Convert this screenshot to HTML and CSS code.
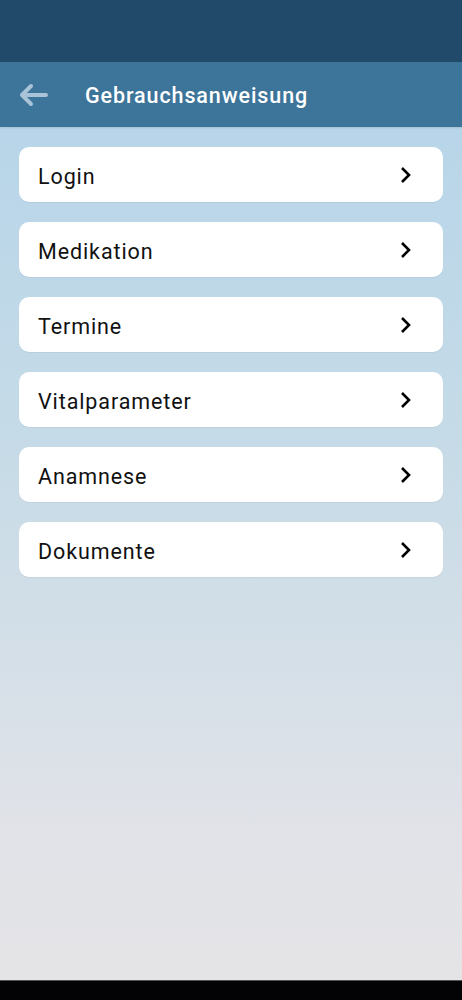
FILE: index.html
```html
<!DOCTYPE html>
<html lang="de">
<head>
  <meta charset="UTF-8">
  <meta name="viewport" content="width=device-width, initial-scale=1.0">
  <title>Gebrauchsanweisung</title>
  <link rel="stylesheet" href="styles.css">
</head>
<body>
  <div class="screen">
    <div class="status-bar"></div>
    <header class="app-bar">
      <button class="back-button" aria-label="Zurück">
        <svg width="32" height="24" viewBox="0 0 32 24">
          <path d="M29 12H5M14 3L5 12l9 9" fill="none" stroke="#a9c3d8" stroke-width="4" stroke-linecap="round" stroke-linejoin="round"/>
        </svg>
      </button>
      <h1>Gebrauchsanweisung</h1>
    </header>

    <main class="menu">
      <a class="menu-item" href="#"><span>Login</span><svg class="chevron" width="14" height="18" viewBox="0 0 14 18"><path d="M3 2l7 7-7 7" fill="none" stroke="#000" stroke-width="2.6"/></svg></a>
      <a class="menu-item" href="#"><span>Medikation</span><svg class="chevron" width="14" height="18" viewBox="0 0 14 18"><path d="M3 2l7 7-7 7" fill="none" stroke="#000" stroke-width="2.6"/></svg></a>
      <a class="menu-item" href="#"><span>Termine</span><svg class="chevron" width="14" height="18" viewBox="0 0 14 18"><path d="M3 2l7 7-7 7" fill="none" stroke="#000" stroke-width="2.6"/></svg></a>
      <a class="menu-item" href="#"><span>Vitalparameter</span><svg class="chevron" width="14" height="18" viewBox="0 0 14 18"><path d="M3 2l7 7-7 7" fill="none" stroke="#000" stroke-width="2.6"/></svg></a>
      <a class="menu-item" href="#"><span>Anamnese</span><svg class="chevron" width="14" height="18" viewBox="0 0 14 18"><path d="M3 2l7 7-7 7" fill="none" stroke="#000" stroke-width="2.6"/></svg></a>
      <a class="menu-item" href="#"><span>Dokumente</span><svg class="chevron" width="14" height="18" viewBox="0 0 14 18"><path d="M3 2l7 7-7 7" fill="none" stroke="#000" stroke-width="2.6"/></svg></a>
    </main>

    <div class="nav-bar"></div>
  </div>
</body>
</html>
```

FILE: styles.css
```css
body {
  margin: 0;
  font-family: Roboto, 'Noto Sans', Arial, sans-serif;
}

.screen {
  height: 1000px;
  display: flex;
  flex-direction: column;
  background: linear-gradient(180deg, #b2d3ea 0%, #c6dbe7 45%, #e2e3e8 85%, #e4e4e6 100%);
}

.status-bar {
  height: 62px;
  background: #20496a;
}

.app-bar {
  height: 65px;
  display: flex;
  align-items: center;
  background: #3d7499;
  box-shadow: 0 1px 2px rgba(0, 0, 0, 0.1);
}

.back-button {
  background: none;
  border: none;
  padding: 0;
  margin-left: 17px;
  width: 32px;
  height: 24px;
  cursor: pointer;
}

.back-button svg {
  display: block;
}

.app-bar h1 {
  margin: 2px 0 0 36px;
  color: #ffffff;
  font-size: 21.5px;
  font-weight: 500;
  letter-spacing: 0.9px;
}

.menu {
  flex: 1;
  display: flex;
  flex-direction: column;
  gap: 20px;
  padding: 20px 19px 0;
}

.menu-item {
  height: 55px;
  display: flex;
  align-items: center;
  justify-content: space-between;
  padding: 0 30px 0 19px;
  background: #ffffff;
  border-radius: 10px;
  color: #111111;
  font-size: 21.5px;
  letter-spacing: 0.9px;
  text-decoration: none;
  box-shadow: 0 1px 1px rgba(0, 0, 0, 0.05);
}

.menu-item span {
  padding-top: 3px;
}

.chevron {
  display: block;
}

.nav-bar {
  height: 19px;
  background: #030305;
  border-top: 1px solid #555;
}
```
